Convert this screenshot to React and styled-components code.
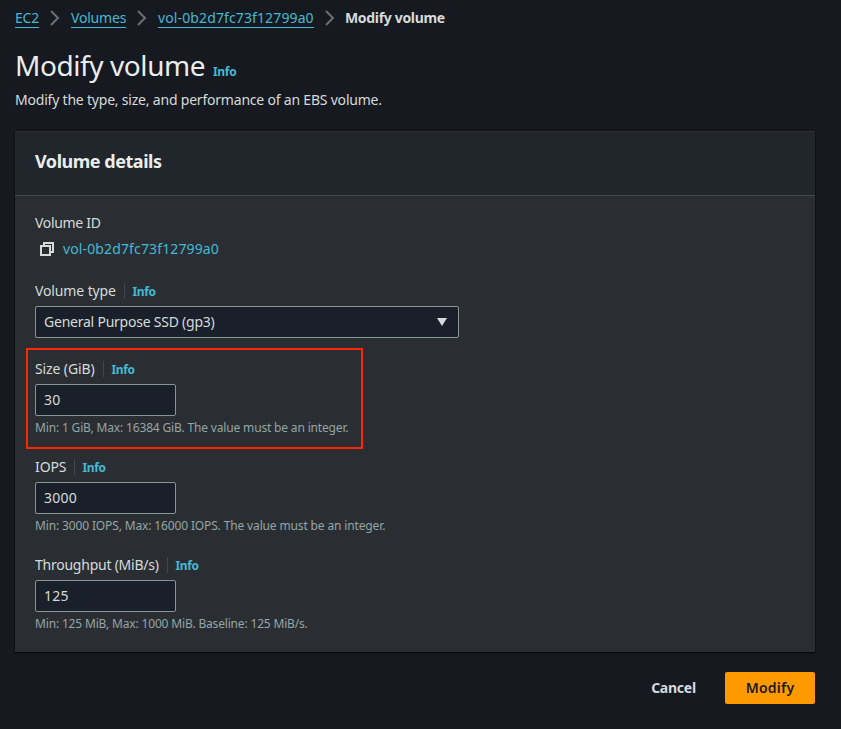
import React from "react";
import styled, { createGlobalStyle, css } from "styled-components";

const GlobalStyle = createGlobalStyle`
  *, *::before, *::after { box-sizing: border-box; }
  body {
    margin: 0;
    min-height: 100vh;
    background: #16191f;
    color: #d5dbdb;
    font-family: "Noto Sans", "Open Sans", sans-serif;
    font-size: 14px;
    line-height: 22px;
  }
`;

const tracking = css`
  letter-spacing: ${(p) => p.$track || 0}px;
`;

const Page = styled.main`
  width: 841px;
  height: 729px;
  padding: 7px 26px 0 15px;
  overflow: hidden;
  white-space: nowrap;
`;

const Breadcrumbs = styled.nav`
  display: flex;
  align-items: flex-start;
  height: 22px;
`;

const Crumb = styled.a`
  width: ${(p) => p.$width}px;
  height: 21px;
  border-bottom: 1px solid #44b9d6;
  color: #44b9d6;
  text-decoration: none;
  ${tracking}
`;

const CurrentCrumb = styled.span`
  margin-left: -1px;
  font-weight: 700;
  letter-spacing: -0.33px;
`;

const Separator = styled.svg`
  width: 16px;
  height: 16px;
  margin: 3px 8px 0;
  fill: none;
  stroke: #687078;
  stroke-width: 2;
`;

const TitleRow = styled.header`
  display: flex;
  align-items: baseline;
  height: 36px;
  margin-top: 18px;
`;

const Title = styled.h1`
  width: 198px;
  margin: 0;
  color: #eaeded;
  font-size: 28px;
  font-weight: 400;
  line-height: 36px;
  letter-spacing: -0.42px;
`;

const InfoLink = styled.a`
  color: #44b9d6;
  font-size: 12px;
  font-weight: 700;
  letter-spacing: -0.3px;
  text-decoration: none;
`;

const Description = styled.p`
  margin: 6px 0 0;
  letter-spacing: -0.205px;
`;

const Panel = styled.section`
  height: 521px;
  margin-top: 20px;
  background: #2a2e33;
  box-shadow: 0 1px 1px rgba(0, 0, 0, 0.6), 0 0 2px rgba(0, 0, 0, 0.5);
`;

const PanelHeader = styled.div`
  display: flex;
  align-items: center;
  height: 65px;
  padding: 0 20px 5px;
  background: #21252c;
  border-top: 1px solid #2a2e33;
  border-bottom: 1px solid #414750;
`;

const PanelTitle = styled.h2`
  margin: 0;
  color: #eaeded;
  font-size: 18px;
  font-weight: 700;
  letter-spacing: -0.47px;
`;

const Fields = styled.div`
  display: flex;
  flex-direction: column;
  gap: 20px;
  padding: 16px 20px 20px;
`;

const Field = styled.div`
  position: relative;
`;

const Highlight = styled.div`
  position: absolute;
  top: -10px;
  left: -9px;
  width: 337px;
  height: 101px;
  border: 2px solid #ff2600;
  pointer-events: none;
`;

const LabelRow = styled.div`
  display: flex;
  align-items: center;
  height: 22px;
  margin-bottom: 4px;
`;

const Label = styled.label`
  width: ${(p) => (p.$width ? `${p.$width}px` : "auto")};
  ${tracking}
`;

const LabelInfo = styled(InfoLink)`
  height: 16px;
  margin-left: 8px;
  padding-left: 7.4px;
  border-left: 1px solid #414750;
  line-height: 18px;
`;

const ResourceRow = styled.div`
  display: flex;
  align-items: center;
  height: 22px;
  padding-left: 4px;
  gap: 8px;
`;

const CopyIcon = styled.svg`
  width: 16px;
  height: 16px;
  fill: none;
  stroke: #d5dbdb;
  stroke-width: 2;
`;

const ResourceLink = styled.a`
  color: #44b9d6;
  letter-spacing: 0.13px;
`;

const SelectBox = styled.div`
  display: flex;
  align-items: center;
  justify-content: space-between;
  width: 424px;
  height: 32px;
  padding: 0 11px 0 8px;
  border: 1px solid #879596;
  border-radius: 2px;
  background: #1a2029;
  letter-spacing: -0.23px;
`;

const Caret = styled.svg`
  width: 10px;
  height: 8px;
  fill: #d5dbdb;
`;

const Input = styled.input`
  display: block;
  width: 141px;
  height: 32px;
  padding: 0 8px 2px;
  border: 1px solid #879596;
  border-radius: 2px;
  outline: 0;
  background: #1a2029;
  color: #d5dbdb;
  font: inherit;
  letter-spacing: 0.25px;
`;

const Hint = styled.div`
  margin-top: 4px;
  color: #95a5a6;
  font-size: 12px;
  line-height: 16px;
  ${tracking}
`;

const Actions = styled.footer`
  display: flex;
  justify-content: flex-end;
  margin-top: 20px;
`;

const Button = styled.button`
  width: ${(p) => (p.$primary ? 90 : 103)}px;
  height: 32px;
  padding: 0;
  border: 0;
  border-radius: 2px;
  background: ${(p) => (p.$primary ? "#ff9900" : "transparent")};
  color: ${(p) => (p.$primary ? "#16191f" : "#d5dbdb")};
  font: inherit;
  font-weight: ${(p) => (p.$primary ? 600 : 700)};
  letter-spacing: ${(p) => (p.$primary ? 0.25 : -0.25)}px;
`;

const Chevron = () => (
  <Separator viewBox="0 0 16 16">
    <path d="M4 1l7 7-7 7" />
  </Separator>
);

const numberFields = [
  { label: "Size (GiB)", width: 60, track: -0.12, value: "30", hint: "Min: 1 GiB, Max: 16384 GiB. The value must be an integer.", hintTrack: -0.165, highlighted: true },
  { label: "IOPS", width: 31, track: -0.1, value: "3000", hint: "Min: 3000 IOPS, Max: 16000 IOPS. The value must be an integer.", hintTrack: -0.14 },
  { label: "Throughput (MiB/s)", width: 124, track: -0.24, value: "125", hint: "Min: 125 MiB, Max: 1000 MiB. Baseline: 125 MiB/s.", hintTrack: -0.17 },
];

export default function App() {
  return (
    <Page>
      <GlobalStyle />
      <Breadcrumbs>
        <Crumb $width={24} $track={-0.2}>EC2</Crumb>
        <Chevron />
        <Crumb $width={55} $track={-0.2}>Volumes</Crumb>
        <Chevron />
        <Crumb $width={156} $track={0.12}>vol-0b2d7fc73f12799a0</Crumb>
        <Chevron />
        <CurrentCrumb>Modify volume</CurrentCrumb>
      </Breadcrumbs>
      <TitleRow>
        <Title>Modify volume</Title>
        <InfoLink>Info</InfoLink>
      </TitleRow>
      <Description>Modify the type, size, and performance of an EBS volume.</Description>
      <Panel>
        <PanelHeader>
          <PanelTitle>Volume details</PanelTitle>
        </PanelHeader>
        <Fields>
          <Field>
            <LabelRow>
              <Label $track={-0.32}>Volume ID</Label>
            </LabelRow>
            <ResourceRow>
              <CopyIcon viewBox="0 0 16 16">
                <path d="M2 5h9v9H2z" />
                <path d="M5 5V2h9v9h-3" />
              </CopyIcon>
              <ResourceLink>vol-0b2d7fc73f12799a0</ResourceLink>
            </ResourceRow>
          </Field>
          <Field>
            <LabelRow>
              <Label $width={81} $track={-0.12}>Volume type</Label>
              <LabelInfo>Info</LabelInfo>
            </LabelRow>
            <SelectBox>
              General Purpose SSD (gp3)
              <Caret viewBox="0 0 10 8">
                <path d="M0 0h10L5 8z" />
              </Caret>
            </SelectBox>
          </Field>
          {numberFields.map((f) => (
            <Field key={f.label}>
              <LabelRow>
                <Label $width={f.width} $track={f.track}>{f.label}</Label>
                <LabelInfo>Info</LabelInfo>
              </LabelRow>
              <Input defaultValue={f.value} />
              <Hint $track={f.hintTrack}>{f.hint}</Hint>
              {f.highlighted && <Highlight />}
            </Field>
          ))}
        </Fields>
      </Panel>
      <Actions>
        <Button>Cancel</Button>
        <Button $primary>Modify</Button>
      </Actions>
    </Page>
  );
}
